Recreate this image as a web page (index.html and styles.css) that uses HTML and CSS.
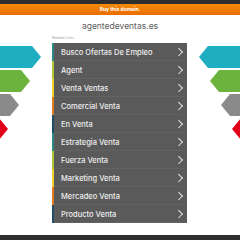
FILE: index.html
```html
<!DOCTYPE html>
<html lang="en">
<head>
    <meta charset="UTF-8">
    <meta name="viewport" content="width=device-width, initial-scale=1.0">
    <title>agentedeventas.es</title>
    <link rel="stylesheet" href="styles.css">
</head>
<body>

    <div class="topbar"></div>
    <div class="buybar">Buy this domain.</div>

    <h1 class="domain">agentedeventas.es</h1>

    <div class="main">
        <div class="side">
            <svg class="arrows" width="52" height="96" viewBox="0 0 52 96">
                <polygon points="0,0 32,0 41,11 32,22 0,22" fill="#1eaec2"/>
                <polygon points="0,24 21,24 30,35 21,46 0,46" fill="#6cb33e"/>
                <polygon points="0,48 10,48 19,59 10,70 0,70" fill="#8a8a8a"/>
                <polygon points="0,72 -1,72 8,83 -1,94 0,94" fill="#e1001a"/>
            </svg>
        </div>

        <div class="center">
            <div class="related">Related Links</div>
            <ul class="links">
                <li class="c1"><a href="#">Busco Ofertas De Empleo</a></li>
                <li class="c2"><a href="#">Agent</a></li>
                <li class="c3"><a href="#">Venta Ventas</a></li>
                <li class="c4"><a href="#">Comercial Venta</a></li>
                <li class="c5"><a href="#">En Venta</a></li>
                <li class="c1"><a href="#">Estrategia Venta</a></li>
                <li class="c2"><a href="#">Fuerza Venta</a></li>
                <li class="c3"><a href="#">Marketing Venta</a></li>
                <li class="c4"><a href="#">Mercadeo Venta</a></li>
                <li class="c5"><a href="#">Producto Venta</a></li>
            </ul>
        </div>

        <div class="side side-right">
            <svg class="arrows flip" width="52" height="96" viewBox="0 0 52 96">
                <polygon points="0,0 32,0 41,11 32,22 0,22" fill="#1eaec2"/>
                <polygon points="0,24 21,24 30,35 21,46 0,46" fill="#6cb33e"/>
                <polygon points="0,48 10,48 19,59 10,70 0,70" fill="#8a8a8a"/>
                <polygon points="0,72 -1,72 8,83 -1,94 0,94" fill="#e1001a"/>
            </svg>
        </div>
    </div>

    <div class="footer"></div>

</body>
</html>
```

FILE: styles.css
```css
body {
    margin: 0;
    font-family: Inter, "Open Sans", sans-serif;
    background-color: #fff;
    overflow: hidden;
}

.topbar {
    height: 4px;
    background-color: #2e2e2e;
}

.buybar {
    height: 11px;
    line-height: 11px;
    text-align: center;
    font-size: 5px;
    font-weight: bold;
    color: #fff;
    background: linear-gradient(#f58a0a, #e96d02);
}

.domain {
    margin: 5px 0 0;
    height: 15px;
    line-height: 13px;
    text-align: center;
    font-size: 8.5px;
    font-weight: normal;
    color: #5c5c5c;
}

.main {
    display: flex;
}

.side {
    width: 52px;
    padding-top: 11px;
}

.side-right {
    width: 53px;
    display: flex;
    justify-content: flex-end;
}

.arrows {
    display: block;
}

.flip {
    transform: scaleX(-1);
}

.center {
    width: 135px;
}

.related {
    height: 8px;
    line-height: 6px;
    font-size: 3.5px;
    color: #9a9a9a;
}

.links {
    list-style: none;
    margin: 0;
    padding: 0;
    background-color: #5a5a5a;
}

.links li {
    height: 18px;
    border-left: 2px solid #2e8884;
    box-shadow: inset 0 -1px 0 #626262;
}

.links a {
    display: flex;
    align-items: center;
    justify-content: space-between;
    height: 18px;
    padding: 0 4px 0 7px;
    font-size: 7.5px;
    font-weight: 500;
    color: #eeeeee;
    text-decoration: none;
}

.links a::after {
    content: "";
    width: 4.5px;
    height: 4.5px;
    margin-right: 2px;
    border-top: 1px solid #e6e6e6;
    border-right: 1px solid #e6e6e6;
    transform: rotate(45deg);
}

.links .c1 { border-left-color: #2e8884; }
.links .c2 { border-left-color: #b3c630; }
.links .c3 { border-left-color: #f1d12b; }
.links .c4 { border-left-color: #e2791d; }
.links .c5 { border-left-color: #1d4d68; }

.footer {
    margin-top: 12px;
    height: 10px;
    background-color: #2e2e2e;
}
```
